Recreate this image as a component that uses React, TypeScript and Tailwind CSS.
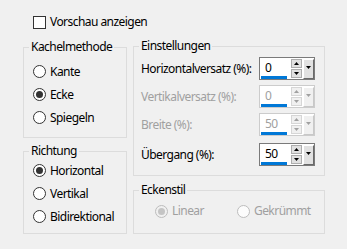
import React from "react";

const font = { fontFamily: '"Noto Sans", "Open Sans", sans-serif', letterSpacing: "-0.55px" };

function Radio({ checked, disabled }: { checked?: boolean; disabled?: boolean }) {
  const stroke = disabled ? "#bcbcbc" : "#333333";
  const fill = disabled ? (checked ? "#f0f0f0" : "#fcfcfc") : "#ffffff";
  return (
    <svg width="13" height="13" viewBox="0 0 13 13" className="shrink-0">
      <circle cx="6.5" cy="6.5" r="6" fill={fill} stroke={stroke} strokeWidth="1" />
      {checked && <circle cx="6.5" cy="6.5" r="3.5" fill={disabled ? "#c4c4c4" : "#333333"} />}
    </svg>
  );
}

function RadioRow({ label, checked, disabled, h = "h-[23px]" }: { label: string; checked?: boolean; disabled?: boolean; h?: string }) {
  return (
    <div className={`flex items-center gap-[4px] ${h}`}>
      <Radio checked={checked} disabled={disabled} />
      <span className={disabled ? "text-[#a0a0a0]" : "text-black"}>{label}</span>
    </div>
  );
}

function SpinBox({ value, disabled }: { value: string; disabled?: boolean }) {
  const border = disabled ? "border-[#cccccc]" : "border-[#7a7a7a]";
  const arrow = disabled ? "#a0a0a0" : "#000000";
  const btn = disabled ? "border-[#d6d6d6] bg-[#f0f0f0]" : "border-[#adadad] bg-[#e1e1e1]";
  return (
    <div className={`w-[56px] h-[23px] border ${border} bg-white flex shrink-0`}>
      <div className="w-[30px] flex flex-col pl-[1px] pt-[1px]">
        <div className={`h-[17px] pl-[4px] leading-[17px] ${disabled ? "text-[#a0a0a0]" : "text-black"}`}>{value}</div>
        <div className="h-[3px] w-[26px] bg-[#0078d7]" />
      </div>
      <div className="flex flex-col gap-[1px] ml-[1px] mt-[1px] w-[11px]">
        <div className={`h-[9px] w-[11px] border ${btn} flex items-center justify-center`}>
          <svg width="5" height="3" viewBox="0 0 5 3"><path d="M0 3 L2.5 0 L5 3 Z" fill={arrow} /></svg>
        </div>
        <div className={`h-[9px] w-[11px] border ${btn} flex items-center justify-center`}>
          <svg width="5" height="3" viewBox="0 0 5 3"><path d="M0 0 L2.5 3 L5 0 Z" fill={arrow} /></svg>
        </div>
      </div>
      <div className={`ml-[1px] mt-[1px] h-[20px] w-[11px] border-l border-t border-white ${disabled ? "border-r-[#c8c8c8] border-b-[#c8c8c8] bg-[#f0f0f0]" : "border-r-[#696969] border-b-[#696969] bg-[#e1e1e1]"} border-r border-b flex justify-center pt-[6px]`}>
        <svg width="5" height="3" viewBox="0 0 5 3"><path d="M0 0 L2.5 3 L5 0 Z" fill={arrow} /></svg>
      </div>
    </div>
  );
}

function Group({ title, className, children }: { title: string; className: string; children: React.ReactNode }) {
  return (
    <fieldset className={`border border-[#dcdcdc] ${className}`}>
      <legend className="ml-[5px] px-[2px] h-[16px] leading-[16px] text-black">{title}</legend>
      {children}
    </fieldset>
  );
}

export default function App() {
  return (
    <div className="w-[347px] h-[249px] bg-[#f0f0f0] text-[12px] text-black overflow-hidden" style={font}>
      <div className="pt-[13px] pl-[33px] h-[31px]">
        <div className="flex items-center gap-[4px] h-[18px]">
          <div className="w-[13px] h-[13px] border border-[#333333] bg-white" />
          <span>Vorschau anzeigen</span>
        </div>
      </div>
      <div className="flex pl-[23px] gap-[6px] mt-[7px]">
        <div className="flex flex-col w-[104px] mt-[1px] gap-[5px]">
          <Group title="Kachelmethode" className="h-[99px]">
            <div className="pt-[5px] pl-[9px] flex flex-col">
              <RadioRow label="Kante" />
              <RadioRow label="Ecke" checked />
              <RadioRow label="Spiegeln" />
            </div>
          </Group>
          <Group title="Richtung" className="h-[91px]">
            <div className="pl-[9px] flex flex-col">
              <RadioRow label="Horizontal" checked />
              <RadioRow label="Vertikal" />
              <RadioRow label="Bidirektional" />
            </div>
          </Group>
        </div>
        <div className="flex flex-col w-[192px] gap-[6px]">
          <Group title="Einstellungen" className="h-[138px]">
            <div className="pt-[3px] pl-[7px] pr-[9px] flex flex-col">
              <div className="flex items-center justify-between h-[23px]">
                <span>Horizontalversatz (%):</span>
                <SpinBox value="0" />
              </div>
              <div className="flex items-center justify-between h-[23px] mt-[5px]">
                <span className="text-[#a0a0a0]">Vertikalversatz (%):</span>
                <SpinBox value="0" disabled />
              </div>
              <div className="flex items-center justify-between h-[23px] mt-[5px]">
                <span className="text-[#a0a0a0]">Breite (%):</span>
                <SpinBox value="50" disabled />
              </div>
              <div className="flex items-center justify-between h-[23px] mt-[7px]">
                <span>Übergang (%):</span>
                <SpinBox value="50" />
              </div>
            </div>
          </Group>
          <Group title="Eckenstil" className="h-[52px]">
            <div className="pt-[4px] pl-[21px] flex items-center gap-[33px]">
              <RadioRow label="Linear" checked disabled h="h-[18px]" />
              <RadioRow label="Gekrümmt" disabled h="h-[18px]" />
            </div>
          </Group>
        </div>
      </div>
    </div>
  );
}
